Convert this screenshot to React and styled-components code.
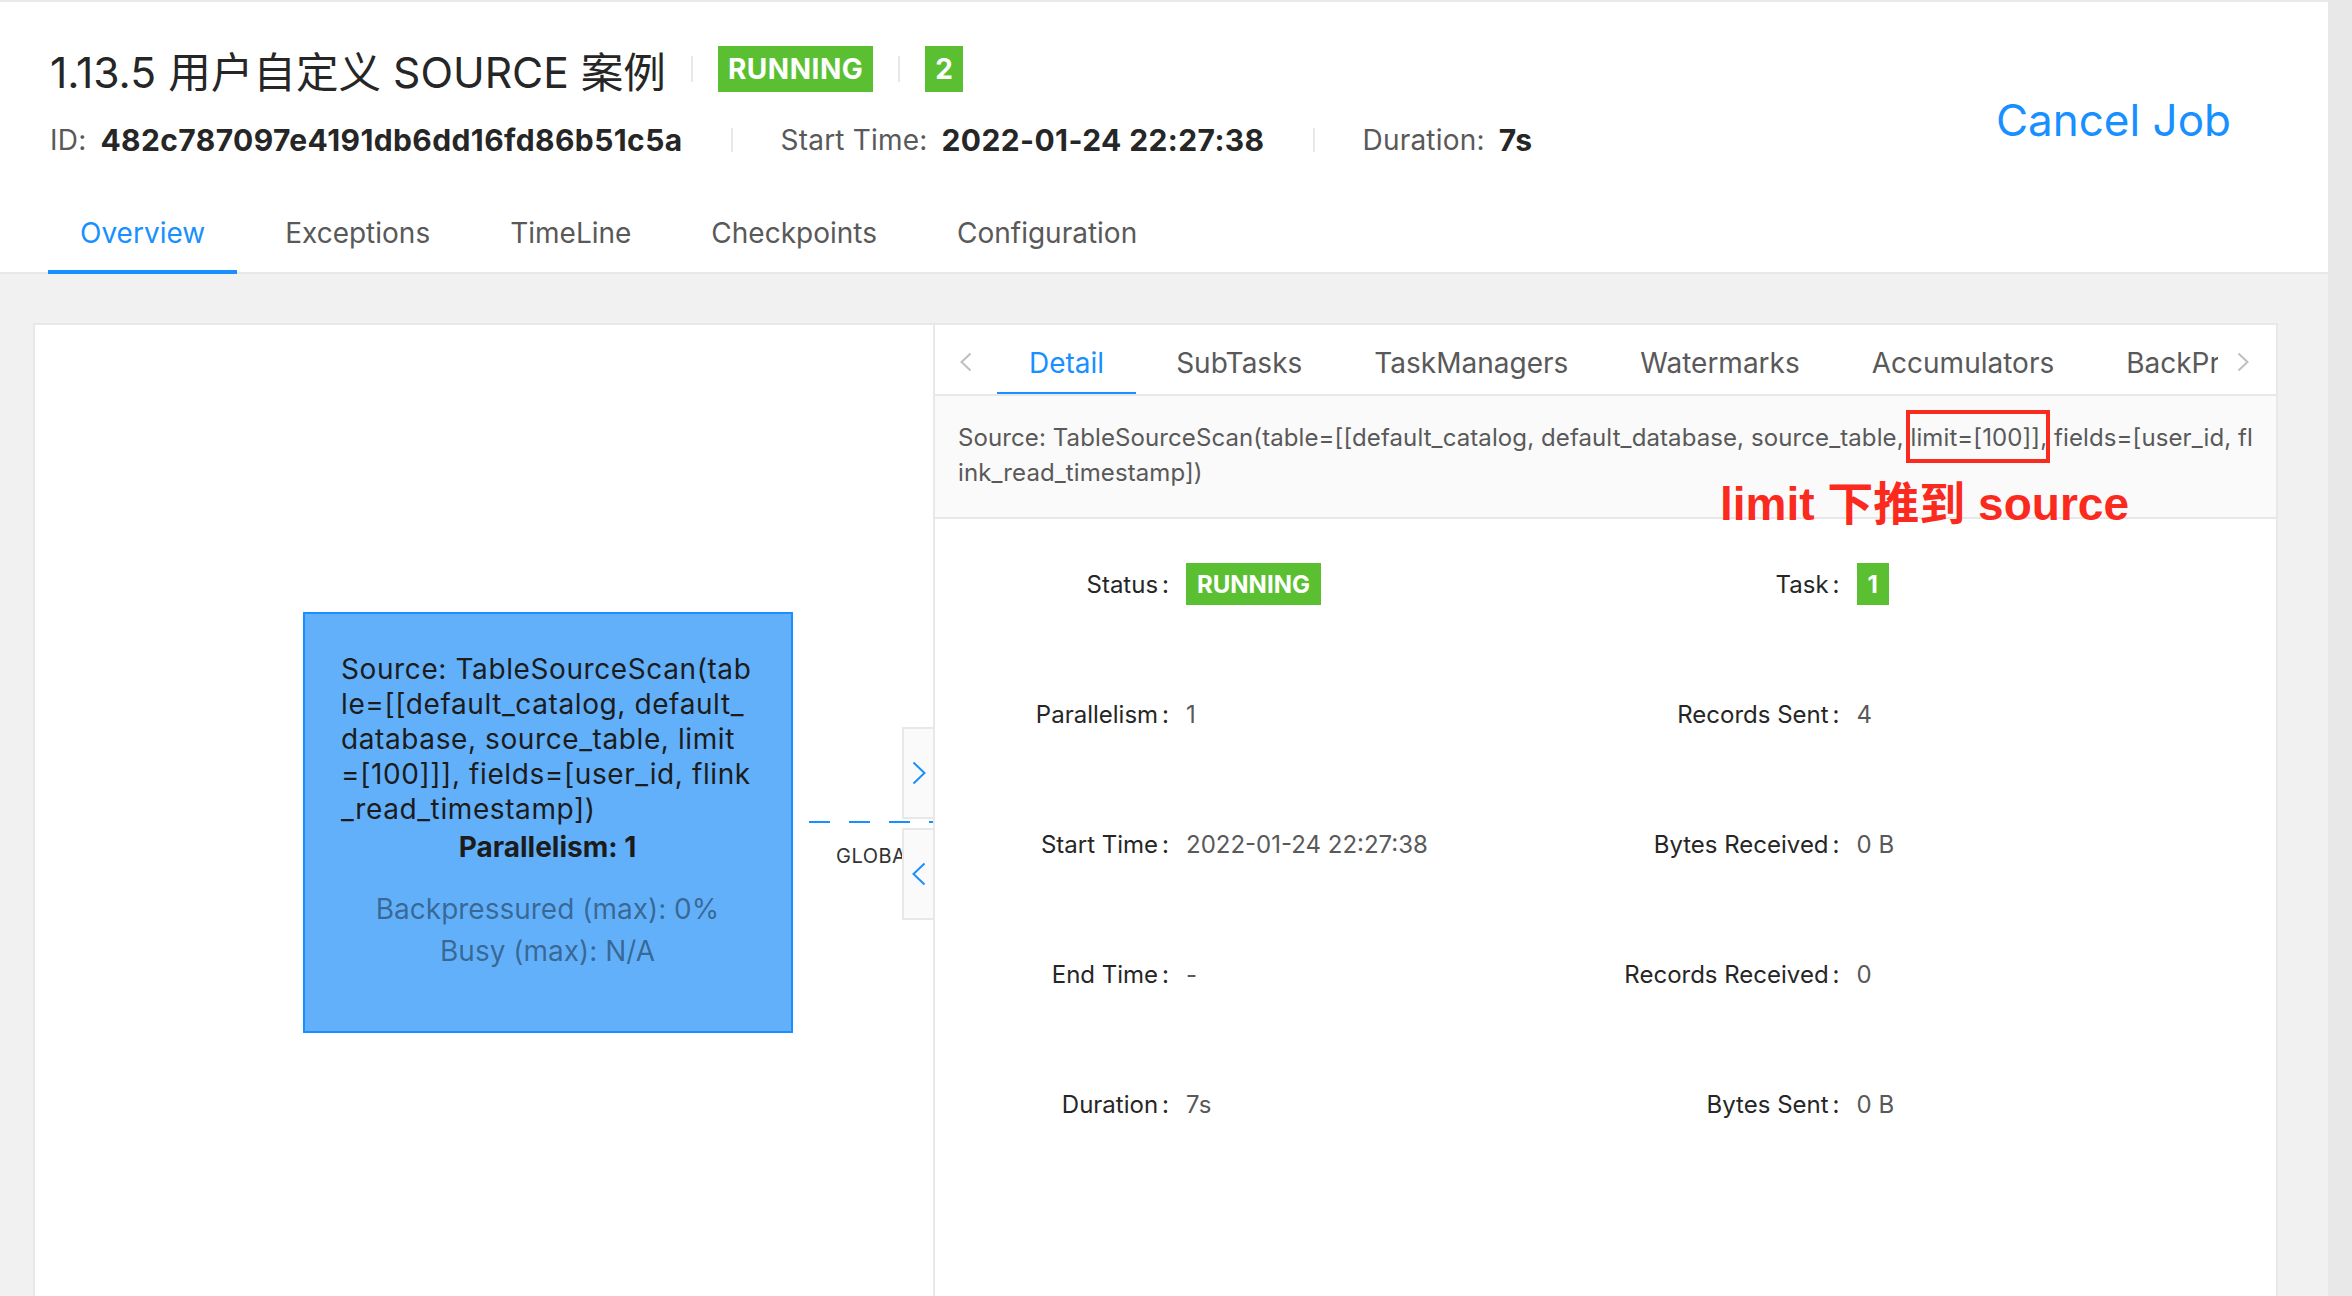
import styled, { createGlobalStyle } from 'styled-components';

const GlobalStyle = createGlobalStyle`
    html, body {
        margin: 0;
        padding: 0;
        height: 100%;
        overflow: hidden;
        background: #f1f1f1;
    }

    body {
        font-family: Inter, 'Noto Sans CJK SC', sans-serif;
        color: #262626;
    }

    * {
        box-sizing: border-box;
    }
`;

const Page = styled.div`
    display: flex;
    width: 2352px;
    height: 1296px;
`;

const Main = styled.div`
    flex: 1;
    display: flex;
    flex-direction: column;
    border-top: 2px solid #e9e9e9;
    min-width: 0;
`;

const ScrollTrack = styled.div`
    width: 24px;
    background: #e8e8e8;
`;

/* ---------- job header ---------- */

const Header = styled.header`
    background: #ffffff;
    padding: 44px 97px 0 50px;
`;

const HeaderTop = styled.div`
    display: flex;
    justify-content: space-between;
    align-items: flex-start;
`;

const TitleRow = styled.div`
    display: flex;
    align-items: center;
    height: 46px;
`;

const Title = styled.h1`
    margin: 0;
    font-size: 42.6px;
    font-weight: 400;
    color: #262626;
    white-space: nowrap;
`;

const Divider = styled.span`
    display: inline-block;
    width: 2px;
    height: ${(p) => p.$h || 26}px;
    background: #e8e8e8;
    margin: 0 ${(p) => p.$gap || 25}px;
`;

const Badge = styled.span`
    display: inline-flex;
    align-items: center;
    justify-content: center;
    height: ${(p) => (p.$small ? 42 : 46)}px;
    padding: 0 ${(p) => (p.$small ? 11 : 10)}px;
    background: #5bbf32;
    color: #ffffff;
    font-weight: 700;
    font-size: ${(p) => (p.$small ? 24 : 28)}px;
    letter-spacing: ${(p) => (p.$small ? 0 : 0.5)}px;
`;

const InfoRow = styled.div`
    display: flex;
    align-items: center;
    height: 40px;
    margin-top: 28px;
    font-size: 28px;
`;

const InfoLabel = styled.span`
    color: #595959;
    margin-right: 14px;
    letter-spacing: 0.2px;
`;

const InfoValue = styled.span`
    color: #262626;
    font-weight: 700;
    font-size: 30px;
    letter-spacing: 0.4px;
`;

const CancelButton = styled.button`
    margin-top: 46px;
    height: 56px;
    padding: 0;
    border: none;
    background: none;
    font-family: Inter, sans-serif;
    font-size: 44px;
    line-height: 56px;
    color: #1890ff;
    cursor: pointer;
`;

const TabsNav = styled.nav`
    display: flex;
    margin: 32px -97px 0 -50px;
    padding-left: 48px;
    border-bottom: 2px solid #e8e8e8;
`;

const Tab = styled.div`
    height: ${(p) => p.$h}px;
    padding: ${(p) => p.$pt}px 32px 0;
    margin: 0 ${(p) => p.$gap}px -2px 0;
    display: flex;
    align-items: center;
    font-size: 28px;
    white-space: nowrap;
    flex-shrink: 0;
    color: ${(p) => (p.$active ? '#1890ff' : '#595959')};
    border-bottom: 4px solid ${(p) => (p.$active ? '#1890ff' : 'transparent')};
    cursor: pointer;
`;

/* ---------- content ---------- */

const Content = styled.section`
    flex: 1;
    padding: 49px 50px 0 33px;
    overflow: hidden;
`;

const Card = styled.div`
    display: flex;
    height: 1100px;
    background: #ffffff;
    border: 2px solid #e8e8e8;
`;

const GraphPanel = styled.div`
    position: relative;
    width: 900px;
    flex-shrink: 0;
    border-right: 2px solid #e8e8e8;
    overflow: hidden;
`;

const Node = styled.div`
    position: absolute;
    left: 268px;
    top: 287px;
    width: 490px;
    height: 421px;
    padding: 38px 37px 0 36px;
    background: #62b0fa;
    border: 2px solid #1890ff;
    font-size: 28px;
    color: #1c1c1c;
`;

const NodeName = styled.div`
    line-height: 35px;
    letter-spacing: 0.6px;
    word-break: break-all;
`;

const NodeParallelism = styled.div`
    margin-top: 3px;
    line-height: 35px;
    text-align: center;
    font-weight: 700;
`;

const NodeMetrics = styled.div`
    margin-top: 23px;
    line-height: 42px;
    text-align: center;
    color: rgba(0, 0, 0, 0.42);
`;

const Edge = styled.svg`
    position: absolute;
    left: 774px;
    top: 495px;
`;

const EdgeLabel = styled.span`
    position: absolute;
    left: 801px;
    top: 519px;
    font-size: 20px;
    line-height: 24px;
    letter-spacing: 0.5px;
    color: #333333;
`;

const CollapseButton = styled.div`
    position: absolute;
    right: 0;
    top: ${(p) => p.$top}px;
    width: 31px;
    height: 92px;
    display: flex;
    align-items: center;
    justify-content: center;
    background: #fafafa;
    border: 2px solid #e8e8e8;
    border-right: none;
    z-index: 1;
`;

const DetailPanel = styled.div`
    position: relative;
    flex: 1;
    min-width: 0;
    display: flex;
    flex-direction: column;
`;

const DetailNav = styled.div`
    display: flex;
    height: 71px;
    border-bottom: 2px solid #e8e8e8;
`;

const NavArrow = styled.div`
    width: ${(p) => p.$w}px;
    flex-shrink: 0;
    display: flex;
    align-items: center;
    justify-content: ${(p) => (p.$start ? 'flex-start' : 'center')};
    padding: 4px 0 0 ${(p) => p.$pl || 0}px;
`;

const DetailTabs = styled.div`
    flex: 1;
    display: flex;
    overflow: hidden;
`;

const Description = styled.div`
    padding: 24px 23px 27px;
    background: #fafafa;
    border-bottom: 2px solid #e8e8e8;
    font-size: 24px;
    line-height: 35px;
    letter-spacing: 0.1px;
    color: #595959;
    word-break: break-all;
`;

const Mark = styled.span`
    padding: 9px 6px 7px 1px;
    margin: 0 -10px 0 -5px;
    border: 4px solid #fa2b1e;
`;

const Annotation = styled.div`
    position: absolute;
    left: 785px;
    top: 155px;
    font-family: 'Liberation Sans', 'Noto Sans CJK SC', sans-serif;
    font-size: 46px;
    line-height: 48px;
    font-weight: 700;
    color: #fa2b1e;
    white-space: nowrap;
`;

const Fields = styled.div`
    display: grid;
    grid-template-columns: 1fr 1fr;
    grid-auto-rows: 130px;
    font-size: 24px;
`;

const Field = styled.div`
    display: flex;
    align-items: center;
`;

const FieldLabel = styled.span`
    width: 234px;
    flex-shrink: 0;
    text-align: right;
    color: #262626;
    white-space: nowrap;

    &::after {
        content: ':';
        margin-left: 4px;
    }
`;

const FieldValue = styled.span`
    margin-left: 17px;
    color: #595959;
`;

const Chevron = ({ dir = 'right', color = '#bfbfbf', w = 12, h = 20 }) => (
    <svg width={w} height={h} viewBox={`0 0 ${w} ${h}`} fill='none'>
        <polyline
            points={
                dir === 'right'
                    ? `1.5,1.5 ${w - 1.5},${h / 2} 1.5,${h - 1.5}`
                    : `${w - 1.5},1.5 1.5,${h / 2} ${w - 1.5},${h - 1.5}`
            }
            stroke={color}
            strokeWidth='2'
            strokeLinejoin='miter'
        />
    </svg>
);

const jobTabs = ['Overview', 'Exceptions', 'TimeLine', 'Checkpoints', 'Configuration'];
const detailTabs = ['Detail', 'SubTasks', 'TaskManagers', 'Watermarks', 'Accumulators', 'BackPressure'];

const fields = [
    ['Status', <Badge $small>RUNNING</Badge>],
    ['Task', <Badge $small>1</Badge>],
    ['Parallelism', '1'],
    ['Records Sent', '4'],
    ['Start Time', '2022-01-24 22:27:38'],
    ['Bytes Received', '0 B'],
    ['End Time', '-'],
    ['Records Received', '0'],
    ['Duration', '7s'],
    ['Bytes Sent', '0 B'],
];

const App = () => {
    return (
        <Page>
            <GlobalStyle />
            <Main>
                <Header>
                    <HeaderTop>
                        <div>
                            <TitleRow>
                                <Title>1.13.5 用户自定义 SOURCE 案例</Title>
                                <Divider />
                                <Badge>RUNNING</Badge>
                                <Divider />
                                <Badge>2</Badge>
                            </TitleRow>
                            <InfoRow>
                                <InfoLabel>ID:</InfoLabel>
                                <InfoValue>482c787097e4191db6dd16fd86b51c5a</InfoValue>
                                <Divider $h={24} $gap={48} />
                                <InfoLabel>Start Time:</InfoLabel>
                                <InfoValue>2022-01-24 22:27:38</InfoValue>
                                <Divider $h={24} $gap={48} />
                                <InfoLabel>Duration:</InfoLabel>
                                <InfoValue>7s</InfoValue>
                            </InfoRow>
                        </div>
                        <CancelButton>Cancel Job</CancelButton>
                    </HeaderTop>
                    <TabsNav>
                        {jobTabs.map((t, i) => (
                            <Tab key={t} $active={i === 0} $h={82} $pt={4} $gap={16}>
                                {t}
                            </Tab>
                        ))}
                    </TabsNav>
                </Header>

                <Content>
                    <Card>
                        <GraphPanel>
                            <Node>
                                <NodeName>
                                    Source: TableSourceScan(table=[[default_catalog, default_database,
                                    source_table, limit=[100]]], fields=[user_id, flink_read_timestamp])
                                </NodeName>
                                <NodeParallelism>Parallelism: 1</NodeParallelism>
                                <NodeMetrics>
                                    Backpressured (max): 0%
                                    <br />
                                    Busy (max): N/A
                                </NodeMetrics>
                            </Node>
                            <Edge width='124' height='4'>
                                <line
                                    x1='0'
                                    y1='2'
                                    x2='124'
                                    y2='2'
                                    stroke='#1890ff'
                                    strokeWidth='2'
                                    strokeDasharray='21 19'
                                />
                            </Edge>
                            <EdgeLabel>GLOBAL</EdgeLabel>
                            <CollapseButton $top={402}>
                                <Chevron dir='right' color='#1890ff' w={14} h={24} />
                            </CollapseButton>
                            <CollapseButton $top={503}>
                                <Chevron dir='left' color='#1890ff' w={14} h={24} />
                            </CollapseButton>
                        </GraphPanel>

                        <DetailPanel>
                            <DetailNav>
                                <NavArrow $w={62}>
                                    <Chevron dir='left' />
                                </NavArrow>
                                <DetailTabs>
                                    {detailTabs.map((t, i) => (
                                        <Tab key={t} $active={i === 0} $h={71} $pt={9} $gap={8}>
                                            {t}
                                        </Tab>
                                    ))}
                                </DetailTabs>
                                <NavArrow $w={58} $start $pl={19}>
                                    <Chevron dir='right' />
                                </NavArrow>
                            </DetailNav>

                            <Description>
                                Source: TableSourceScan(table=[[default_catalog, default_database,
                                source_table, <Mark>limit=[100]]</Mark>, fields=[user_id,
                                flink_read_timestamp])
                            </Description>

                            <Annotation>limit 下推到 source</Annotation>

                            <Fields>
                                {fields.map(([label, value]) => (
                                    <Field key={label}>
                                        <FieldLabel>{label}</FieldLabel>
                                        <FieldValue>{value}</FieldValue>
                                    </Field>
                                ))}
                            </Fields>
                        </DetailPanel>
                    </Card>
                </Content>
            </Main>
            <ScrollTrack />
        </Page>
    );
};

export default App;
